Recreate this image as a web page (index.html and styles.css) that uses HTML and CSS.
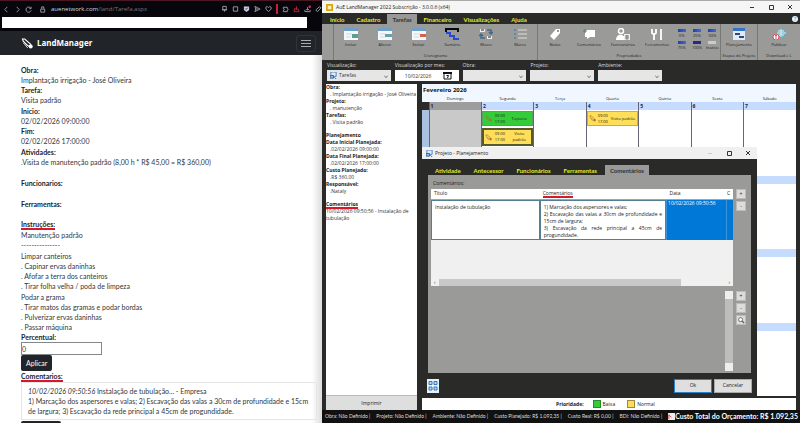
FILE: index.html
```html
<!DOCTYPE html>
<html lang="pt-BR">
<head>
<meta charset="utf-8">
<title>LandManager</title>
<link rel="stylesheet" href="styles.css">
</head>
<body>
<svg class="defs" aria-hidden="true">
  <symbol id="tool" viewBox="0 0 16 16"><path d="M2 2l3 0 8 7-2 3-3-2-5-5z" fill="none" stroke="currentColor" stroke-width="1.5"/><path d="M3 7l6 7" stroke="currentColor"/><circle cx="13" cy="12" r="2.6" fill="currentColor"/></symbol>
  <symbol id="cal" viewBox="0 0 14 12"><path d="M0 0h14v12H0z" fill="#f4f8fa"/><path d="M0 0h14v3H0z" fill="#6f9fc6"/><path d="M2 6h6M2 9h5" stroke="#cfd8dc"/></symbol>
  <symbol id="form" viewBox="0 0 8 8"><path d="M1 0h6v5H1z" fill="#dcecff" stroke="#4779b8"/><path d="M0 4h4v3H0z" fill="#8eb9e8" stroke="#315e9c"/><path d="M5 6l2 2" stroke="#315e9c"/></symbol>
</svg>
<div class="desk">
  <section class="browser">
    <header class="chrome">
      <div class="address">
        <svg class="ci" viewBox="0 0 8 8"><path d="M5 1L2 4l3 3"/></svg>
        <svg class="ci" viewBox="0 0 8 8"><path d="M3 1l3 3-3 3"/></svg>
        <svg class="ci" viewBox="0 0 8 8"><path d="M6.600 2.500A3 3 0 1 0 7 5M7 1v2H5"/></svg>
        <svg class="ci lock" viewBox="0 0 8 8"><path d="M2 3.500h4.500V7H2zM3 3V1h2.500v2"/></svg>
        <span class="url">auenetwork.com<i>/land/Tarefa.aspx</i></span>
        <span class="exts">
          <svg class="ci" viewBox="0 0 8 8"><path d="M2 1h4v4H2zM1 5h6M4 5v2"/></svg>
          <svg class="ci" viewBox="0 0 8 8"><path d="M1.500 1.500h5v5h-5z"/></svg>
          <svg class="ci" viewBox="0 0 8 8"><path d="M1 1h6v4L4 7.500 1 5z" fill="#c9cbe8" stroke="none"/><path d="M2.500 3.500l1 1 2-2" stroke="#25253a"/></svg>
          <svg class="ci" viewBox="0 0 8 8"><path d="M1 1l6 3-6 3 1-3zM2 4h3"/></svg>
          <svg class="ci" viewBox="0 0 8 8"><path d="M4 7L1 4V2l1.500-1L4 2.500 5.500 1 7 2v2z"/></svg>
          <b class="redbar"></b>
          <svg class="ci" viewBox="0 0 8 8"><path d="M1.500 2h4.500v1.500a1 1 0 1 1 0 2V7H1.500V5.500a1 1 0 0 0 0-2z"/></svg>
          <svg class="ci red" viewBox="0 0 8 8"><path d="M4 1v4M2 3l-1 4h6L6 4H2"/></svg>
          <svg class="ci" viewBox="0 0 8 8"><path d="M4 2v3M2.500 4L4 5.500 5.500 4M1 5v2h6V5"/><circle cx="6.500" cy="1.500" r="1.500" fill="#e0244c" stroke="none"/></svg>
          <svg class="ci" viewBox="0 0 8 8"><path d="M1 5l4-3.500 2 1L3 7 1.500 6z"/></svg>
        </span>
      </div>
      <div class="bookmarks"></div>
    </header>
    <nav class="navbar">
      <a class="brand" href="#"><svg viewBox="0 0 16 16"><use href="#tool"/></svg>LandManager</a>
      <button class="burger" aria-label="Menu"><i></i><i></i><i></i></button>
    </nav>
    <main class="task">
      <div class="grp"><b>Obra:</b><p>Implantação irrigação - José Oliveira</p><b>Tarefa:</b><p>Visita padrão</p></div>
      <div class="grp"><b>Inicio:</b><p>02/02/2026 09:00:00</p><b>Fim:</b><p>02/02/2026 17:00:00</p></div>
      <div class="grp wide"><b>Atividades:</b><p>.Visita de manutenção padrão (8,00 h * R$ 45,00 = R$ 360,00)</p></div>
      <div class="grp wide"><b>Funcionarios:</b></div>
      <div class="grp wide"><b>Ferramentas:</b></div>
      <div class="grp"><b class="mark">Instruções:</b><p>Manutenção padrão</p><p>---------------</p></div>
      <div class="grp"><p>Limpar canteiros</p><p>. Capinar ervas daninhas</p><p>. Afofar a terra dos canteiros</p><p>. Tirar folha velha / poda de limpeza</p></div>
      <div class="grp last"><p>Podar a grama</p><p>. Tirar matos das gramas e podar bordas</p><p>. Pulverizar ervas daninhas</p><p>. Passar máquina</p></div>
      <label class="pl" for="pct">Percentual:</label>
      <input class="pct" id="pct" value="0">
      <button class="dark">Aplicar</button>
      <b class="mark com">Comentarios:</b>
      <article class="comment"><p><em>10/02/2026 09:50:56</em> Instalação de tubulação... - Empresa</p><p>1) Marcação dos aspersores e valas; 2) Escavação das valas a 30cm de profundidade e 15cm de largura; 3) Escavação da rede principal a 45cm de progundidade.</p></article>
      <button class="dark more" aria-label="Comentar"></button>
    </main>
  </section>

  <section class="app">
    <header class="title">
      <svg class="logo" viewBox="0 0 8 8"><path d="M0 0h8v8H0z" fill="#d9a514"/><path d="M2 2h4v4H2z" fill="#fff1b0"/></svg>
      <span>AuE LandManager 2022 Subscrição - 3.0.0.6 (x64)</span>
      <svg class="win" viewBox="0 0 45 6"><path d="M1 3.500h4M20.500 1.500h4v4h-4zM39 1l4 4M43 1l-4 4"/></svg>
    </header>
    <nav class="menu">
      <button>Início</button><button>Cadastro</button><button class="on">Tarefas</button><button>Financeiro</button><button>Visualizações</button><button>Ajuda</button>
      <span class="help">?</span>
    </nav>
    <div class="ribbon">
      <div class="rg pad"></div>
      <div class="rg crono"><div class="tools">
        <button><svg viewBox="0 0 14 12"><use href="#cal"/><path d="M8 6h6v4H8z" fill="#639a92"/></svg>Incluir</button>
        <button><svg viewBox="0 0 14 12"><use href="#cal"/><path d="M7 6h7v3H7z" fill="#6b9db1"/></svg>Alterar</button>
        <button><svg viewBox="0 0 14 12"><use href="#cal"/><path d="M8 6h6v3H8z" fill="#d95f50"/></svg>Excluir</button>
        <button><svg viewBox="0 0 14 12"><path d="M1 4V1h12v3" fill="none" stroke="#080808" stroke-width="2"/><path d="M1 5h4v3h4v3h5" fill="none" stroke="#2849d5" stroke-width="2"/></svg>Sumário</button>
        <button><svg viewBox="0 0 14 12"><path d="M1 1h5v3H1zM8 8h5v3H8z" fill="#eee"/><path d="M2 2h3M9 9h3" stroke="#222"/><path d="M8 2h4v4M10 4l2 2 2-2M6 10H2V6M0 8l2-2 2 2" fill="none" stroke="#426b8b" stroke-width="1.500"/></svg>Mover</button>
        <button><svg viewBox="0 0 14 12"><path d="M5 2h9M5 6h9M5 10h9" stroke="#ddd"/><path d="M1 2h2M1 6h2M1 10h2" stroke="#568ca9" stroke-width="2"/></svg>Marco</button>
      </div><small>Cronograma</small></div>
      <div class="rg props"><div class="tools">
        <button><svg viewBox="0 0 14 12"><path d="M2 8l6-7h4v4l-6 7z" fill="#fff"/><circle cx="10" cy="3" r="1" fill="#777"/></svg>Notas</button>
        <button><svg viewBox="0 0 14 12"><path d="M3 2h10v7H8l-3 2V9H3z" fill="#fff"/><path d="M1 3h4M3 1v4" stroke="#527c7b"/></svg>Comentários</button>
        <button><svg viewBox="0 0 14 12"><circle cx="5" cy="3" r="2.500" fill="none" stroke="#fff" stroke-width="1.500"/><path d="M0 12c0-7 9-7 9 0z" fill="#fff"/><path d="M8 6h6v6H8z" fill="#eee"/><path d="M9 8h4M9 10h4M11 7v5" stroke="#777"/></svg>Funcionários</button>
        <button><svg viewBox="0 0 14 12"><path d="M2 1v4l2 1.500V12M6 1v4L4 6.500M11 1v11" fill="none" stroke="#fff" stroke-width="1.800"/></svg>Ferramentas</button>
        <div class="percents"><button>0%</button><button>25%</button><button>50%</button><button>75%</button><button>100%</button><button>Inativo</button></div>
      </div><small>Propriedades</small></div>
      <div class="rg plan"><div class="tools"><button><svg viewBox="0 0 14 12"><path d="M1 0h12v12H1z" fill="#dfe9f8"/><path d="M1 0h12v3H1z" fill="#3370c8"/><path d="M3 6h5M7 9h5" stroke="#27497f" stroke-width="2"/></svg>Planejamento</button></div><small>Etapas do Projeto</small></div>
      <div class="rg pub"><div class="tools"><button><svg viewBox="0 0 14 12"><circle cx="9" cy="5" r="4.500" fill="#68b2c7"/><path d="M5 5h9M9 1v8M6 3h6M6 7h6" stroke="#d9eef3"/><circle cx="4" cy="9" r="3" fill="#fff" stroke="#dc5059"/><path d="M4 11V7M3 8l1-1 1 1" stroke="#dc5059" fill="none"/></svg>Publicar</button></div><small>Download e L</small></div>
    </div>
    <div class="filters">
      <label>Visualização:<span class="sel task-sel"><svg viewBox="0 0 8 8"><use href="#form"/></svg><select><option>Tarefas</option></select></span></label>
      <label>Visualização por mes:<span class="date"><input value="10/02/2026"><svg viewBox="0 0 9 9"><path d="M1 2h7v6H1z" fill="#fff" stroke="#111"/><path d="M0 1h9v2H0z" fill="#111"/><path d="M3.500 4.500h2L4.500 7" fill="none" stroke="#111"/></svg></span></label>
      <label>Obra:<span class="sel"><select><option></option></select></span></label>
      <label>Projeto:<span class="sel"><select><option></option></select></span></label>
      <label>Ambiente:<span class="sel"><select><option></option></select></span></label>
    </div>
    <div class="work">
      <aside class="side">
        <div class="info">
          <b>Obra:</b><p>. Implantação irrigação - José Oliveira</p><b>Projeto:</b><p>. manutenção</p><b>Tarefas:</b><p>. Visita padrão</p>
          <b class="sp">Planejamento</b><b>Data Inicial Planejada:</b><p>.02/02/2026 09:00:00</p><b>Data Final Planejada:</b><p>.02/02/2026 17:00:00</p><b>Custo Planejado:</b><p>.R$ 360,00</p><b>Responsável:</b><p>.Nataly</p>
          <b class="sp"><span class="mark">Comentários</span></b><p class="flat">10/02/2026 09:50:56 - Instalação de tubulação</p>
        </div>
        <button class="print">Imprimir</button>
      </aside>
      <div class="right">
        <div class="calendar">
          <h2>Fevereiro 2026</h2>
          <table>
            <thead><tr><th class="wk"></th><th>Domingo</th><th>Segunda</th><th>Terça</th><th>Quarta</th><th>Quinta</th><th>Sexta</th><th>Sábado</th></tr></thead>
            <tbody>
              <tr><td class="wk first"></td><td class="past"><b>1</b></td>
                <td><b>2</b><div class="ev green"><svg viewBox="0 0 16 16"><use href="#tool"/></svg><time>09:00 17:00</time><span>Topiaria</span></div><div class="ev picked"><svg viewBox="0 0 16 16"><use href="#tool"/></svg><time>09:00 17:00</time><span>Visita padrão</span></div></td>
                <td><b>3</b></td><td><b>4</b><div class="ev line"><svg viewBox="0 0 16 16"><use href="#tool"/></svg><time>09:00 17:00</time><span>Visita padrão</span></div></td><td><b>5</b></td><td><b>6</b></td><td><b>7</b></td></tr>
              <tr><td class="wk"></td><td><b></b></td><td><b></b></td><td><b></b></td><td><b></b></td><td><b></b></td><td><b></b></td><td><b></b></td></tr>
              <tr><td class="wk"></td><td><b></b></td><td><b></b></td><td><b></b></td><td><b></b></td><td><b></b></td><td><b></b></td><td><b></b></td></tr>
              <tr><td class="wk"></td><td><b></b></td><td><b></b></td><td><b></b></td><td><b></b></td><td><b></b></td><td><b></b></td><td><b></b></td></tr>
            </tbody>
          </table>
        </div>
        <div class="legend"><b>Prioridade:</b><span><i class="g"></i>Baixa</span><span><i></i>Normal</span></div>

        <div class="dialog" role="dialog" aria-label="Projeto - Planejamento">
          <header class="dtitle"><svg class="logo" viewBox="0 0 8 8"><use href="#form"/></svg><span>Projeto - Planejamento</span><svg class="win" viewBox="0 0 45 6"><path class="off" d="M1 3.500h4"/><path d="M20.500 1.500h4v4h-4zM39 1l4 4M43 1l-4 4"/></svg></header>
          <nav class="tabs"><button>Atividade</button><button>Antecessor</button><button>Funcionários</button><button>Ferramentas</button><button class="on">Comentários</button></nav>
          <div class="panel">
            <span class="cap">Comentários:</span>
            <div class="row">
              <div class="gridbox">
                <table>
                  <thead><tr><th class="c1">Título</th><th class="c2"><span class="mark">Comentários</span></th><th class="c3">Data</th><th class="c4">C</th></tr></thead>
                  <tbody><tr><td><textarea aria-label="Título">Instalação de tubulação</textarea></td><td><textarea aria-label="Comentários" class="just">1) Marcação dos aspersores e valas;
2) Escavação das valas a 30cm de profundidade e 15cm de largura;
3) Escavação da rede principal a 45cm de progundidade.</textarea></td><td class="blue">10/02/2026 09:50:56</td><td class="blue"></td></tr></tbody>
                </table>
                <div class="hbar"><span>‹</span><i></i><span>›</span></div>
              </div>
              <div class="btns"><button>+</button><button>-</button></div>
            </div>
            <div class="row low">
              <div class="vbar"><i></i><i></i></div>
              <div class="btns"><button>+</button><button>-</button><button aria-label="Buscar"><svg viewBox="0 0 10 10"><circle cx="4.500" cy="4.500" r="2.500" fill="#fff" stroke="#555"/><path d="M6.500 6.500L9 9" stroke="#555" stroke-width="1.500"/></svg></button></div>
            </div>
          </div>
          <footer class="dfoot">
            <button class="qr" aria-label="Código"><svg viewBox="0 0 11 13"><path d="M2 2.500h3v3H2zM7 2.500h3v3H7zM2 8h3v3H2zM7 8h3v3H7z" fill="#bcd9f2" stroke="#3b78b5"/></svg></button>
            <button class="ok">Ok</button><button>Cancelar</button>
          </footer>
        </div>
      </div>
    </div>
    <footer class="status"><span>Obra: Não Definido |</span><span>Projeto: Não Definido |</span><span>Ambiente: Não Definido |</span><span>Custo Planejado: R$ 1.092,35 |</span><span>Custo Real: R$ 0,00 |</span><span>BDI: Não Definido |</span><svg viewBox="0 0 8 8"><path d="M0 0h8v8H0z" fill="#eee"/><path d="M1 7V2l3 3" fill="none" stroke="#c43b3b"/></svg><b>Custo Total do Orçamento: R$ 1.092,35</b></footer>
  </section>
</div>
</body>
</html>
```

FILE: styles.css
```css
* { box-sizing: border-box; margin: 0; padding: 0; }
body { font-family: "Open Sans", "Noto Sans", sans-serif; font-size: 5px; line-height: 7px; color: #222; background: #262626; }
button, input, select, textarea { font: inherit; color: inherit; border: 0; border-radius: 0; background: none; min-width: 0; }
button { white-space: nowrap; }
svg { display: block; flex: none; }
a { color: inherit; text-decoration: none; }
.defs { position: absolute; width: 0; height: 0; }
.desk { display: grid; grid-template-columns: 322fr 478fr; height: 100vh; overflow: hidden; }

/* Browser window */
.browser { display: flex; flex-direction: column; min-width: 0; overflow: hidden; background: linear-gradient(to left, #dcdcdc, #fff 10px); font-family: Lato, "Noto Sans", sans-serif; font-size: 7px; line-height: 10px; }
.chrome { flex: none; background: #07060d; border-top: 1px solid #4a1620; padding: 0 0 3px 2px; }
.address { display: flex; align-items: center; height: 16px; padding-left: 1px; gap: 4px; color: #b4b4bc; }
.ci { width: 7px; height: 7px; fill: none; stroke: #a5a5ad; stroke-width: 1; }
.ci.lock { margin-left: 3px; }
.ci.red { stroke: #d21c34; }
.url { margin-left: 1px; flex: 1; font-family: "Open Sans", sans-serif; font-size: 6px; color: #d6d6dc; }
.url i { font-style: normal; color: #77777f; }
.exts { display: flex; gap: 4px; align-items: center; }
.exts .ci { height: 8px; }
.redbar { width: 2px; height: 10px; background: #c81e36; }
.bookmarks { height: 11px; background: #fff; margin-right: 15px; }
.navbar { flex: none; height: 24px; background: #212529; display: flex; align-items: center; justify-content: space-between; padding: 0 6px 0 21px; }
.brand { display: flex; align-items: center; gap: 4px; color: #fff; font-family: "Noto Sans", sans-serif; font-weight: 700; font-size: 8px; }
.brand svg { width: 12px; height: 13px; }
.burger { width: 20px; height: 17px; border: 1px solid #30353a; border-radius: 3px; padding: 4px; display: flex; flex-direction: column; justify-content: space-between; }
.burger i { height: 1px; background: #a9abad; }
.task { flex: 1; padding: 10px 5px 0 21px; display: flex; flex-direction: column; align-items: flex-start; color: #33373b; }
.task b, .pl { display: block; font-weight: 700; color: #212529; }
.grp { margin-bottom: 1px; }
.grp.wide { margin-bottom: 11px; }
.grp.last { margin-bottom: 0; }
.mark { box-shadow: 0 2px #d8182a; }
.grp .mark, .task .com { width: max-content; line-height: 8px; margin-bottom: 2px; }
.pct { width: 81px; height: 13px; border: 1px solid #85888b; background: #fff; }
.dark { flex: none; background: #212529; color: #fff; border-radius: 2px; height: 16px; padding: 0 5px; }
.task .com { margin-top: 1px; }
.comment { flex: none; align-self: stretch; border: 1px solid #e6e6e6; padding: 3px 6px; }
.more { width: 40px; margin-top: 1px; }

/* Desktop application */
.app { display: flex; flex-direction: column; min-width: 0; background: #2a2a29; }
.title { flex: none; height: 13px; display: flex; align-items: center; gap: 3px; background: #f5f5f5; border-top: 1px solid #aaa; padding: 0 6px 0 4px; }
.logo { width: 7px; height: 7px; }
.title span, .dtitle span { flex: 1; }
.win { width: 45px; height: 6px; fill: none; stroke: #333; stroke-width: 1; }
.win .off { stroke: #ccc; }
.menu { flex: none; height: 11px; display: flex; padding: 1px 2px 0 3px; align-items: stretch; }
.menu button, .tabs button { color: #e3ea2d; font-family: Lato, sans-serif; font-weight: 700; font-size: 6px; padding: 0 5px; }
.menu button + button { margin-left: 2px; }
.menu button.on, .tabs button.on { background: #999; color: #333; }
.help { margin-left: auto; align-self: center; width: 6px; height: 6px; line-height: 6px; border-radius: 50%; text-align: center; background: #e9f4ff; color: #2366b5; }
.ribbon { flex: none; height: 36px; display: grid; grid-template-columns: 12fr 204fr 183fr 37fr 42fr; background: #9a9a99; font-size: 4px; line-height: 6px; }
.rg { display: flex; flex-direction: column; justify-content: space-between; border-right: 1px solid #777; min-width: 0; overflow: hidden; padding: 4px 0 1px; }
.rg:last-child { border: 0; }
.rg small { font-size: 4px; text-align: center; white-space: nowrap; }
.tools { display: flex; }
.tools > button { flex: 1; display: flex; flex-direction: column; align-items: center; gap: 2px; }
.tools > button svg { width: 14px; height: 12px; }
.percents { flex: 0 0 46px; display: grid; grid-template-columns: repeat(3, 1fr); row-gap: 2px; }
.percents button { line-height: 5px; }
.percents button::before { content: ""; display: block; width: 8px; height: 3px; margin: 1px auto 1px; background: linear-gradient(90deg, #23439c, #386be0); }
.percents button:nth-child(5)::before { background: #202d83; }
.percents button:last-child::before { background: #ccc; }
.filters { flex: none; height: 24px; padding: 2px 138px 0 5px; display: grid; grid-template-columns: repeat(5, 1fr); column-gap: 4px; color: #ddd; }
.filters label { display: flex; flex-direction: column; gap: 1px; white-space: nowrap; }
.sel, .date { display: flex; align-items: center; height: 11px; background: #e6e6e6; color: #333; padding: 0 3px; }
.sel svg { width: 7px; height: 7px; }
.sel select { appearance: none; flex: 1; height: 11px; padding-left: 2px; }
.sel::after { content: ""; width: 3px; height: 3px; border: solid #777; border-width: 0 1px 1px 0; transform: rotate(45deg) scale(.7); }
.date { background: #fff; padding: 0 7px; }
.date input { flex: 1; height: 11px; width: 10px; padding-left: 3px; }
.date svg { width: 9px; height: 9px; }
.work { flex: 1; min-height: 0; display: grid; grid-template-columns: 91fr 374fr; column-gap: 5px; padding: 0 4px; }
.side { display: flex; flex-direction: column; min-width: 0; min-height: 0; background: #fff; }
.info { flex: 1; overflow: hidden; color: #333; }
.info b { display: block; color: #222; }
.info p { padding-left: 4px; }
.info .flat { padding: 0; }
.info .sp { margin-top: 6px; }
.print { height: 15px; background: #dedede; border-top: 1px solid #bbb; }
.right { position: relative; display: flex; flex-direction: column; min-width: 0; min-height: 0; }
.calendar { flex: 1; min-height: 0; display: flex; flex-direction: column; background: #fff; }
.calendar h2 { font-size: 6px; line-height: 12px; font-weight: 700; background: #f0f7ff; padding-left: 1px; color: #111; }
.calendar table { flex: 1; width: 100%; border-collapse: collapse; table-layout: fixed; }
.calendar th { height: 6px; line-height: 6px; font-size: 4px; font-weight: 400; background: #f0f7ff; }
.calendar tbody tr { height: 25%; }
.calendar .wk { width: 7px; background: #a9c2e2; border: 0; }
.calendar th.wk { background: #f0f7ff; }
.calendar td { vertical-align: top; border-left: 1px solid #667; }
.calendar td > b { display: block; height: 8px; line-height: 8px; padding-left: 1px; background: #c5dcff; color: #224; }
.calendar .first { background: linear-gradient(#2a2a29 8px, #a9c2e2 8px); }
.calendar .past { background: #c9c9c9; }
.calendar .past > b { background: #9d9d9d; }
.ev { display: flex; align-items: center; gap: 2px; height: 15px; margin: 1px 0 2px; padding: 0 2px; background: #ffdf57; border: 1px solid #b7ad6c; font-size: 4px; line-height: 6px; }
.ev svg { width: 7px; height: 7px; color: #a66d3c; }
.ev time { width: 12px; text-align: center; }
.ev span { flex: 1; text-align: center; }
.ev.line { gap: 1px; padding: 0 1px; white-space: nowrap; }
.ev.line time { white-space: normal; }
.ev.green { background: #33cd38; border-color: #5a9f62; }
.ev.picked { height: 18px; border: 2px solid #56592c; padding: 0 1px; }
.legend { flex: none; height: 12px; margin-top: 2px; background: #fff; display: flex; align-items: center; gap: 12px; padding-left: 134px; }
.legend b { margin-right: -3px; }
.legend span { display: flex; align-items: center; gap: 2px; }
.legend i { width: 8px; height: 8px; background: #ffdb58; border: 1px solid #9a8742; }
.legend i.g { background: #33cd38; border-color: #278a2b; }
.status { flex: none; height: 13px; display: flex; align-items: center; gap: 6px; padding: 0 3px; background: #111; color: #ddd; font-family: Lato, sans-serif; white-space: nowrap; }
.status svg { width: 7px; height: 7px; margin-right: -6px; }
.status b { margin-left: auto; font-size: 7px; color: #fff; }

/* Planning dialog floating over the calendar */
.dialog { position: absolute; left: 0; right: 39px; top: 63px; bottom: 12px; display: flex; flex-direction: column; background: #2a2a29; }
.dtitle { flex: none; height: 12px; display: flex; align-items: center; gap: 2px; background: #f0f0f0; padding: 0 5px 0 4px; }
.tabs { flex: none; height: 16px; padding: 6px 0 0 8px; display: flex; gap: 3px; }
.panel { flex: 1; min-height: 0; margin: 0 6px; padding: 5px 5px 2px 3px; background: #9a9a99; display: flex; flex-direction: column; }
.cap { line-height: 7px; margin: 0 0 2px 2px; }
.row { display: flex; gap: 3px; }
.row.low { flex: 1; margin-top: 5px; justify-content: flex-end; }
.gridbox { flex: 1; height: 97px; background: #f0f0f0; display: flex; flex-direction: column; justify-content: space-between; }
.gridbox table { width: 100%; table-layout: fixed; border-collapse: collapse; }
.gridbox th { height: 10px; background: #fff; text-align: left; font-weight: 400; padding-left: 3px; border-bottom: 1px solid #8aacc2; overflow: hidden; }
.gridbox .c1 { width: 36%; }
.gridbox .c3 { width: 20%; }
.gridbox .c4 { width: 2%; padding: 0; }
.gridbox td { height: 40px; }
.gridbox textarea { display: block; width: 100%; height: 40px; padding: 3px 3px 0; background: #fff; border: 1px solid #537f91; resize: none; overflow: hidden; }
.gridbox .just { text-align: justify; }
.gridbox .blue { background: #0078d7; color: #fff; vertical-align: top; padding-left: 1px; border-left: 1px solid #3c93da; }
.hbar { height: 7px; display: flex; gap: 3px; padding: 0 3px; }
.hbar i { flex: 0 1 82%; background: #c8c8c9; }
.hbar span:last-child { margin-left: auto; }
.btns { flex: none; width: 10px; display: flex; flex-direction: column; gap: 2px; }
.btns button { height: 10px; background: #dcdcdc; border: 1px solid #bbb; line-height: 7px; }
.btns svg { width: 8px; height: 8px; }
.vbar { width: 8px; background: #bdbdbd; display: flex; flex-direction: column; justify-content: space-between; }
.vbar i { height: 8px; background: #eee; }
.dfoot { flex: none; height: 25px; display: flex; align-items: center; gap: 2px; padding: 0 5px; }
.dfoot button { width: 38px; height: 14px; background: #dfdfdf; border: 1px solid #aaa; }
.dfoot .ok { border-color: #2c82c9; }
.dfoot .qr { width: 12px; margin-right: auto; background: #e5f1fb; border: 0; }
.qr svg { width: 11px; height: 13px; }
```
